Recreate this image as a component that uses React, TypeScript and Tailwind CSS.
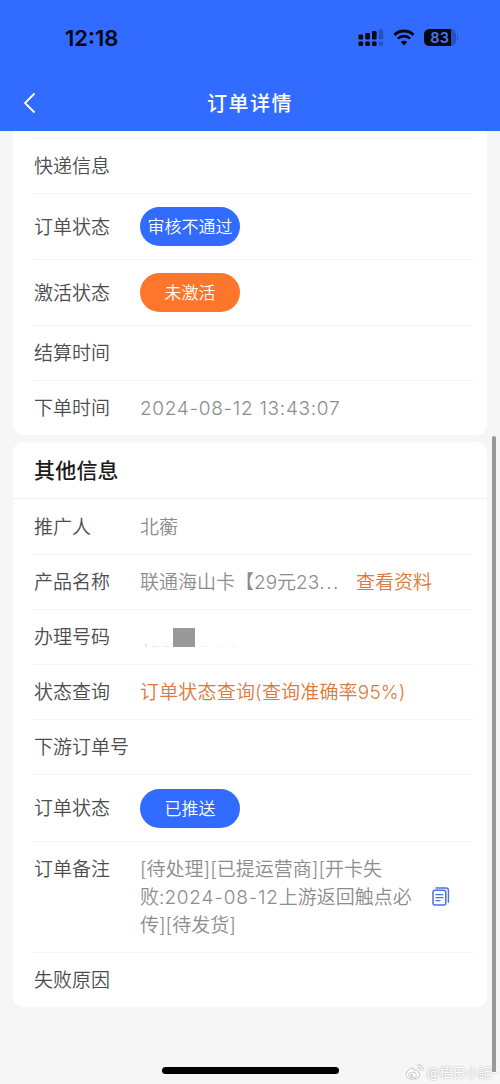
import React from 'react';
import clsx from 'clsx';

type RowProps = {
  label: string;
  height: string;
  last?: boolean;
  children?: React.ReactNode;
};

const Row: React.FC<RowProps> = ({ label, height, last, children }) => (
  <div className={clsx('mr-[14px] ml-5 flex items-center pl-px', height, !last && 'border-b border-[#f3f3f3]')}>
    <div className="w-[106px] shrink-0 pt-[2px] text-[#4d4d4d]">{label}</div>
    {children}
  </div>
);

const Pill: React.FC<{ color: string; children: React.ReactNode }> = ({ color, children }) => (
  <span className={clsx('flex h-[39px] w-[100px] items-center justify-center rounded-full pt-px text-[17px] text-white', color)}>
    {children}
  </span>
);

const SignalIcon = () => (
  <svg width="26" height="18" viewBox="0 0 26 18" fill="#05070f">
    <rect x="0.5" y="5.5" width="4.6" height="5" rx="1.3" />
    <rect x="7.3" y="4" width="4.6" height="6.5" rx="1.3" />
    <rect x="14" y="2" width="4.6" height="8.5" rx="1.3" />
    <rect x="0.5" y="12.5" width="4.6" height="4.5" rx="1.3" />
    <rect x="7.3" y="12.5" width="4.6" height="4.5" rx="1.3" />
    <rect x="14" y="12.5" width="4.6" height="4.5" rx="1.3" />
    <g opacity="0.25">
      <rect x="20.8" y="0.3" width="4.4" height="10.2" rx="1.3" />
      <rect x="20.8" y="12.5" width="4.4" height="4.5" rx="1.3" />
    </g>
  </svg>
);

const WifiIcon = () => (
  <svg width="22" height="17" viewBox="0 0 22 17" fill="none" stroke="#05070f">
    <path d="M1.4 5.9a13.8 13.8 0 0 1 19.2 0" strokeWidth="2.9" />
    <path d="M4.9 9.6a8.8 8.8 0 0 1 12.2 0" strokeWidth="2.7" />
    <path d="M11 16.4l-3.2-3.3a4.6 4.6 0 0 1 6.4 0z" fill="#05070f" stroke="none" />
  </svg>
);

const Battery = () => (
  <div className="flex items-center">
    <div className="flex h-[17px] w-8 items-center overflow-hidden rounded-[5.5px] bg-[#2553c4]">
      <div className="flex h-full w-[27px] items-center justify-end bg-[#05070f] pt-px pr-[1px]">
        <span className="text-[14.5px] leading-none font-semibold tracking-[0.4px] text-[#4b79f0]">83</span>
      </div>
    </div>
    <div className="ml-px h-[5px] w-[1.5px] rounded-r-full bg-[#2553c4]" />
  </div>
);

const CopyIcon = () => (
  <svg width="18" height="20" viewBox="0 0 18 20" fill="none" stroke="#4a73dc" strokeLinecap="round" strokeLinejoin="round">
    <rect x="1" y="3.3" width="12.8" height="14.8" rx="2" strokeWidth="1.5" />
    <path d="M4 1h10.2a2.2 2.2 0 0 1 2.2 2.2v11.8" strokeWidth="1.4" />
    <path d="M4 7.7h6.8M4 10.700h6.800M4 13.700h4" strokeWidth="1.3" />
  </svg>
);

const WeiboIcon = () => (
  <svg width="20" height="18" viewBox="0 0 20 18" fill="none" stroke="#cfcfcf" strokeWidth="1.1" strokeLinecap="round">
    <path d="M8.500 5.500C5.500 4 1 8.500 1 11.800c0 2.700 3 4.400 6.500 4.400 4.500 0 7.500-2.500 7.500-4.700 0-1.500-1.100-2-2-2.300.5-2-.8-3-4-1.500.3-1 .2-1.800-.5-2.200z" fill="#fff" />
    <ellipse cx="7.500" cy="12" rx="3.800" ry="2.800" />
    <circle cx="6.800" cy="12.300" r="1.100" fill="#cfcfcf" />
    <path d="M12.500 2c3.500-.8 6.300 2 5.400 5.400M13 4.700c1.700-.3 2.900.9 2.500 2.500" />
  </svg>
);

export default function App() {
  return (
    <div className="relative flex h-[1084px] w-[500px] flex-col overflow-hidden bg-[#f6f6f6] font-['Inter','Noto_Sans_CJK_SC',sans-serif] text-[19px] leading-7 font-[350]">
      <header className="h-[131px] shrink-0 bg-[#316bff]">
        <div className="flex h-[75px] items-center justify-between pr-[42px] pl-[65px]">
          <span className="text-[22px] font-semibold text-[#05070f]">12:18</span>
          <div className="flex items-center gap-[9px]">
            <SignalIcon />
            <WifiIcon />
            <Battery />
          </div>
        </div>
        <div className="grid h-14 grid-cols-3 items-center text-white">
          <svg className="ml-[23px]" width="13" height="22" viewBox="0 0 13 22" fill="none" stroke="white" strokeWidth="1.8">
            <path d="M11.500 1.500L2 11l9.500 9.500" />
          </svg>
          <h1 className="pt-[2px] text-center text-[20px] font-medium tracking-[1.5px]">订单详情</h1>
        </div>
      </header>

      <section className="mx-[13px] h-[304px] shrink-0 rounded-b-[10px] bg-white">
        <div className="mr-[14px] ml-5 h-2 border-b border-[#f3f3f3]" />
        <Row label="快递信息" height="h-[55px]" />
        <Row label="订单状态" height="h-[66px]">
          <Pill color="bg-[#316bff]">审核不通过</Pill>
        </Row>
        <Row label="激活状态" height="h-[66px]">
          <Pill color="bg-[#fd762c]">未激活</Pill>
        </Row>
        <Row label="结算时间" height="h-[55px]" />
        <Row label="下单时间" height="h-[54px]" last>
          <span className="pt-[2px] tracking-[0.7px] text-[#8c8c8c]">2024-08-12 13:43:07</span>
        </Row>
      </section>

      <section className="mx-[13px] mt-[7px] h-[565px] shrink-0 rounded-[10px] bg-white">
        <div className="flex h-[57px] items-center border-b border-[#eeeeee] pl-[21px]">
          <h2 className="pt-[2px] text-[21px] font-medium tracking-[0.2px] text-[#1c1c1c]">其他信息</h2>
        </div>
        <Row label="推广人" height="h-[56px]">
          <span className="pt-[2px] text-[#8c8c8c]">北蘅</span>
        </Row>
        <Row label="产品名称" height="h-[55px]">
          <span className="w-[200px] pt-[2px] whitespace-nowrap text-[#8c8c8c]">
            联通海山卡【29元23<span className="tracking-[1.5px]">...</span>
          </span>
          <a className="ml-4 pt-[2px] text-[#e0783c]">查看资料</a>
        </Row>
        <Row label="办理号码" height="h-[55px]">
          <div className="flex items-end gap-[5px]">
            <div className="ml-[5px] h-[3px] w-[2px] bg-[#e8e8e8]" />
            <div className="h-px w-[6px] bg-[#e8e8e8]" />
            <div className="h-px w-[6px] bg-[#e8e8e8]" />
            <div className="-ml-px h-[19px] w-[22px] bg-[#999999]" />
            <div className="h-px w-[6px] bg-[#f0f0f0]" />
            <div className="ml-2 h-px w-[6px] bg-[#f4f4f4]" />
            <div className="h-px w-[6px] bg-[#f4f4f4]" />
          </div>
        </Row>
        <Row label="状态查询" height="h-[55px]">
          <span className="pt-[2px] tracking-[0.18px] whitespace-nowrap text-[#e0783c]">订单状态查询(查询准确率95%)</span>
        </Row>
        <Row label="下游订单号" height="h-[55px]" />
        <Row label="订单状态" height="h-[67px]">
          <Pill color="bg-[#316bff]">已推送</Pill>
        </Row>
        <div className="mr-[14px] ml-5 flex h-[111px] border-b border-[#f3f3f3] pt-[14px] pl-px">
          <div className="w-[106px] shrink-0 text-[#4d4d4d]">订单备注</div>
          <p className="w-[276px] shrink-0 whitespace-nowrap text-[#8c8c8c]">
            [待处理][已提运营商][开卡失
            <br />
            败:<span className="tracking-[0.8px]">2024-08-12</span>上游返回触点必
            <br />
            传][待发货]
          </p>
          <div className="mt-[31px] ml-4">
            <CopyIcon />
          </div>
        </div>
        <Row label="失败原因" height="h-[53px]" last />
      </section>

      <div className="absolute top-[436px] right-[4px] h-[637px] w-[4px] rounded-full bg-[#999999]" />
      <div className="absolute top-[1067px] left-[162px] h-[7px] w-[177px] rounded-full bg-black" />
      <div className="absolute top-[1062px] left-[405px] flex items-center gap-[2px] text-[13px] leading-5 font-normal whitespace-nowrap text-white [text-shadow:0_0_2px_#999]">
        <WeiboIcon />
        <span>@梧日小記-</span>
      </div>
    </div>
  );
}
